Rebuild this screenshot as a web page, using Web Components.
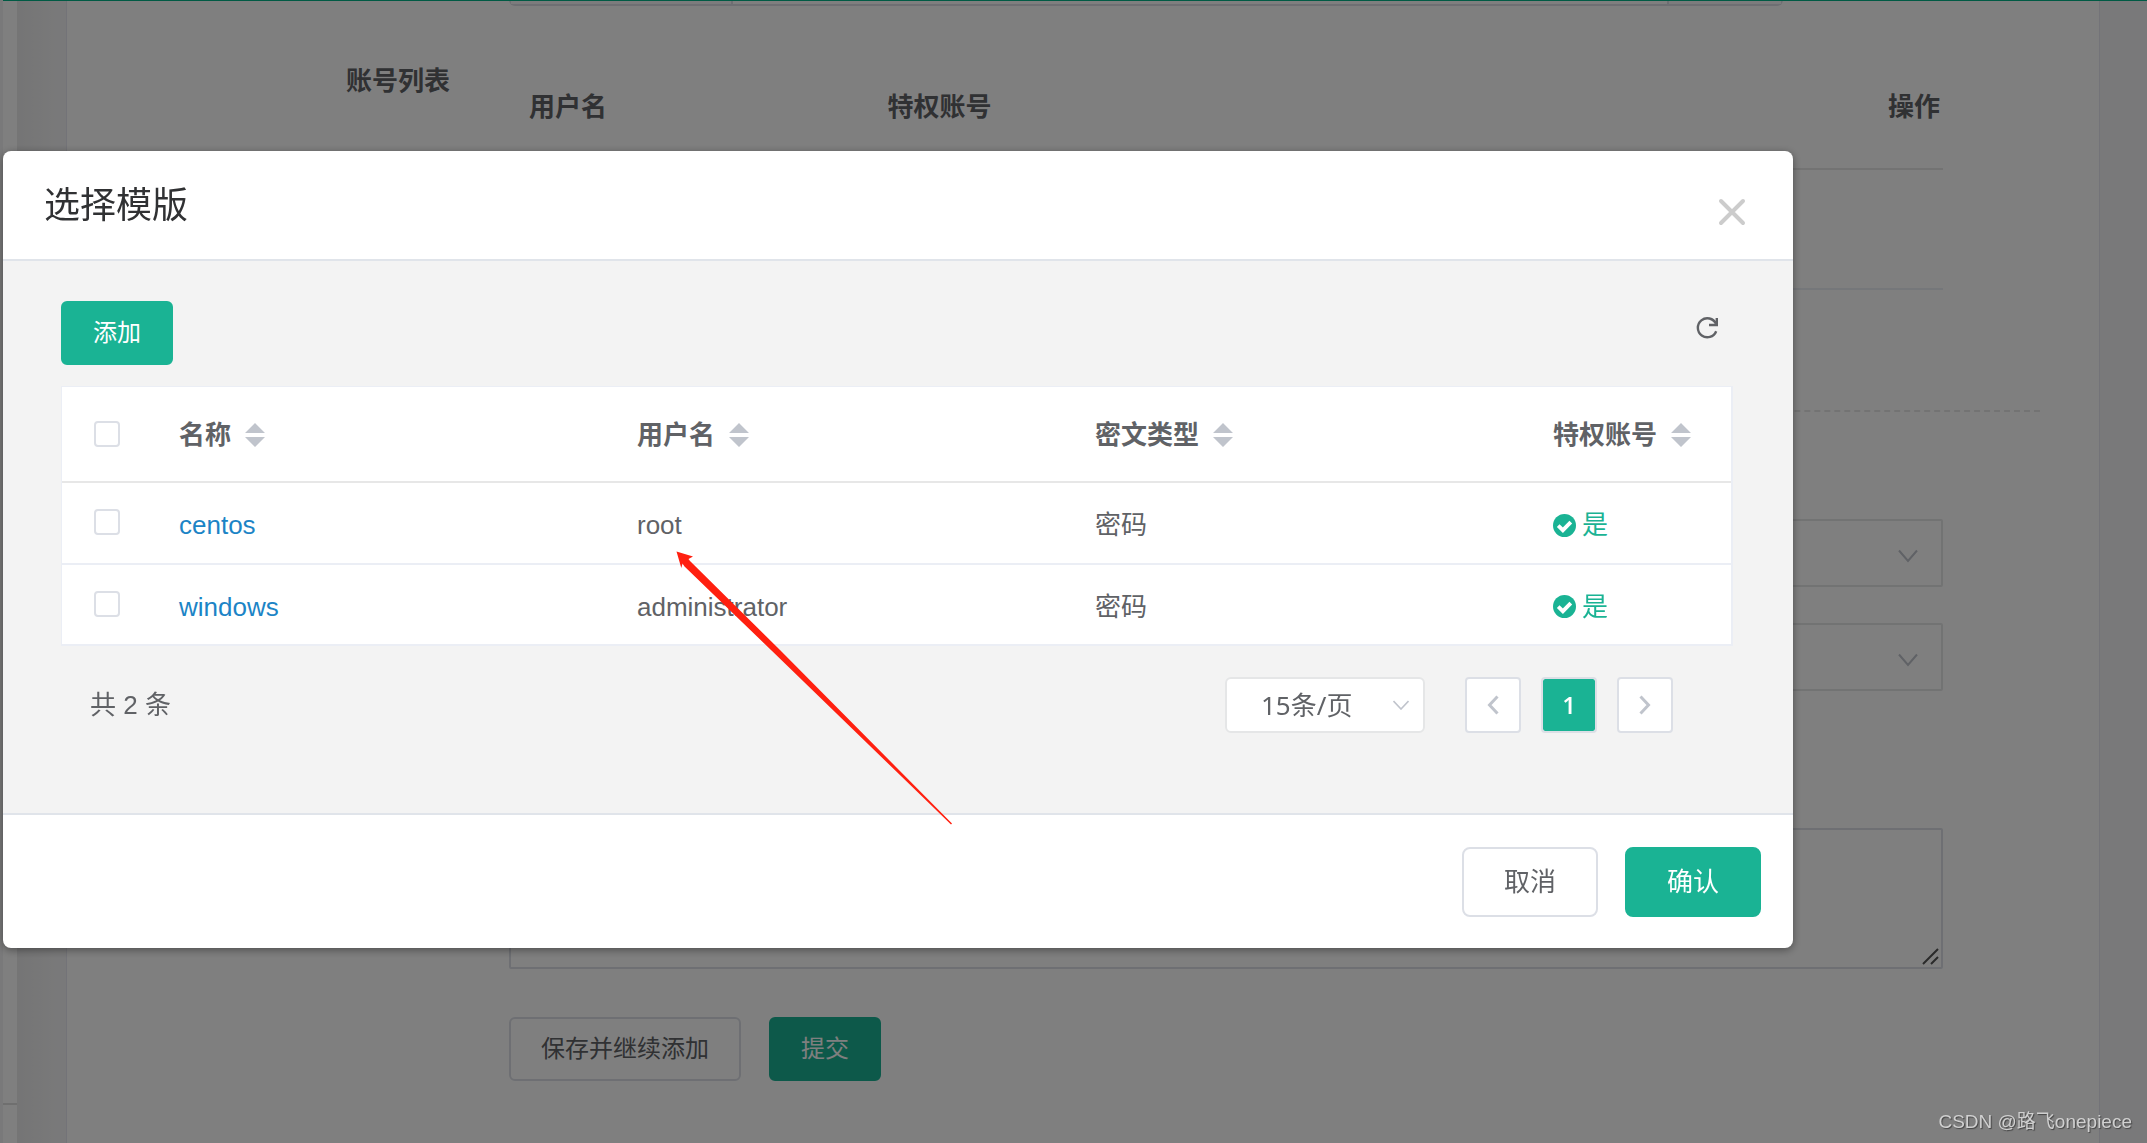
<!DOCTYPE html>
<html lang="zh-CN">
<head>
<meta charset="utf-8">
<title>选择模版</title>
<style>
  html, body { margin: 0; min-height: 100vh; }
  body {
    --brand: #1ab394;
    --line: #dcdfe6;
    --soft: #e5e6e7;
    --pale: #ebeef5;
    --text: #606266;
    font: 26px/36px "Liberation Sans", "Noto Sans CJK SC", sans-serif;
    color: var(--text);
    background: #f3f3f4;
    overflow: hidden;
  }
</style>
</head>
<body>
<account-page>
  <account-form></account-form>
</account-page>

<modal-layer>
  <template-dialog heading="选择模版">
    <table-toolbar></table-toolbar>
    <template-table></template-table>
    <page-bar total="2"></page-bar>
    <ui-button slot="footer" size="large">取消</ui-button>
    <ui-button slot="footer" size="large" kind="primary">确认</ui-button>
  </template-dialog>
  <pointer-arrow></pointer-arrow>
</modal-layer>
<corner-mark>CSDN @路飞onepiece</corner-mark>

<script>
const define = (name, render) => {
  customElements.define(name, class extends HTMLElement {
    constructor() {
      super();
      this.attachShadow({ mode: "open" });
    }
    connectedCallback() {
      this.shadowRoot.innerHTML = "<style>*{box-sizing:border-box}button,input,select,textarea{font:inherit;color:inherit;margin:0}</style>" + render(this);
    }
  });
};

define("ui-button", () => `
  <style>
    :host { display: block; }
    button {
      display: block; height: 64px; padding: 0 30px; border: 2px solid var(--line); border-radius: 6px;
      background: #fff; color: var(--text); font-size: 24px; line-height: 36px; white-space: nowrap;
    }
    :host([kind="primary"]) button { background: var(--brand); border-color: var(--brand); color: #fff; }
    :host([size="large"]) button { height: 70px; padding: 0 40px; border-radius: 8px; font-size: 26px; }
  </style>
  <button type="button"><slot></slot></button>`);

define("account-page", () => `
  <style>
    :host { display: grid; grid-template-columns: 3px 14px 49px minmax(0, 1fr) 47px; min-height: 100vh; }
    .rail { display: flex; flex-direction: column; justify-content: flex-end; background: #fff; }
    .rail i { height: 40px; border-top: 2px solid #dedede; }
    .gap { background: linear-gradient(90deg, #eaeaeb, #f3f3f4 40px); }
    .card { background: #fff; border: solid #e7e7f0; border-width: 0 1px; }
    .bar { position: absolute; inset: 0 0 auto 3px; height: 1px; background: #00b489; }
  </style>
  <div></div>
  <aside class="rail"><i></i></aside>
  <div class="gap"></div>
  <main class="card"><slot></slot></main>
  <div></div>
  <div class="bar"></div>`);

define("form-select", el => `
  <style>
    :host { display: grid; align-items: center; }
    select, svg { grid-area: 1 / 1; }
    select { appearance: none; width: 100%; height: 68px; padding: 0 60px 0 30px; border: 2px solid var(--soft); border-radius: 2px; background: #fff; }
    svg { justify-self: end; margin: 6px 24px 0 0; pointer-events: none; }
  </style>
  <select aria-label="${el.getAttribute("label")}"></select>
  <svg width="22" height="14" viewBox="0 0 22 14" fill="none" stroke="#c0c4cc" stroke-width="2"><path d="M2 1.500 11 12 20 1.500"/></svg>`);

define("account-form", () => `
  <style>
    :host { display: block; padding: 0 59px 0 60px; }
    form { display: flex; flex-direction: column; }
    .row { display: grid; grid-template-columns: 323px minmax(0, 1fr); gap: 59px; margin-right: 97px; }
    .row > :last-child { grid-column: 2; }
    .group { display: grid; grid-template-columns: 222px 1fr 114px; height: 6px; width: 1274px; border: 2px solid var(--line); border-top: 0; border-radius: 0 0 6px 6px; }
    .group i { background: #f8f8fa; }
    .group i:first-child { border-right: 2px solid var(--line); }
    .group i:last-child { border-left: 2px solid var(--line); }
    .accounts { margin-top: 38px; }
    label, .label { text-align: right; font-weight: 700; line-height: 74px; color: #606266; }
    table { width: 100%; border-collapse: collapse; table-layout: fixed; }
    th { height: 125px; padding: 2px 3px 0 20px; text-align: left; border-bottom: 2px solid #e7e7e7; }
    th:nth-child(-n+2) { width: 25%; }
    th:last-child { text-align: right; }
    td { height: 120px; padding: 0; border-bottom: 2px solid var(--pale); }
    hr { width: 100%; margin: 120px 0 107px; border: 0; border-top: 2px dashed #e7e7e7; }
    .next { margin-top: 36px; }
    .note { margin-top: 137px; }
    .area { display: grid; position: relative; }
    textarea { resize: none; width: 100%; height: 141px; border: 2px solid var(--line); border-radius: 2px; background: #fff; }
    .area svg { position: absolute; right: 4px; bottom: 4px; }
    .actions { margin-top: 48px; }
    .actions > div { display: flex; gap: 28px; }
  </style>
  <form>
    <div class="row"><div class="group"><i></i><b></b><i></i></div></div>
    <div class="row accounts">
      <div class="label">账号列表</div>
      <table>
        <thead><tr><th>用户名</th><th>特权账号</th><th>操作</th></tr></thead>
        <tbody><tr><td colspan="3"></td></tr></tbody>
      </table>
    </div>
    <hr>
    <div class="row"><form-select label="网域"></form-select></div>
    <div class="row next"><form-select label="节点"></form-select></div>
    <div class="row note"><div class="area">
      <textarea aria-label="备注"></textarea>
      <svg width="17" height="17" viewBox="0 0 17 17" stroke="#555" stroke-width="2"><path d="M1 16 16 1M9 16 16 9"/></svg>
    </div></div>
    <div class="row actions"><div>
      <ui-button>保存并继续添加</ui-button>
      <ui-button kind="primary">提交</ui-button>
    </div></div>
  </form>`);

define("modal-layer", () => `
  <style>
    :host { display: block; position: fixed; inset: 0; padding: 151px 354px 0 3px; background: rgba(0,0,0,.5); box-sizing: border-box; }
  </style>
  <slot></slot>`);

define("template-dialog", el => `
  <style>
    :host { display: block; border-radius: 8px; background: #fff; box-shadow: 0 2px 8px rgba(0,0,0,.4); overflow: hidden; }
    header { display: flex; justify-content: space-between; align-items: flex-start; height: 110px; padding: 30px 29px 0 41px; border-bottom: 2px solid #e0e4ea; }
    h2 { margin: 0; font-size: 36px; line-height: 50px; font-weight: 400; color: #303133; }
    header button { display: grid; place-items: center; width: 64px; height: 62px; padding: 0; border: 0; background: none; }
    section { display: flex; flex-direction: column; padding: 40px 60px 80px 58px; background: #f3f3f3; }
    footer { display: flex; justify-content: flex-end; gap: 27px; padding: 32px 32px 31px; border-top: 2px solid #e0e4ea; }
  </style>
  <header>
    <h2>${el.getAttribute("heading")}</h2>
    <button type="button" aria-label="关闭"><svg width="28" height="28" viewBox="0 0 28 28" stroke="#ccc" stroke-width="4" stroke-linecap="round"><path d="M3 3 25 25M25 3 3 25"/></svg></button>
  </header>
  <section><slot></slot></section>
  <footer><slot name="footer"></slot></footer>`);

define("table-toolbar", () => `
  <style>
    :host { display: flex; justify-content: space-between; align-items: flex-start; height: 65px; margin-bottom: 20px; }
    .refresh { display: grid; place-items: center; width: 52px; height: 54px; padding: 0; border: 0; background: none; }
  </style>
  <ui-button kind="primary">添加</ui-button>
  <button class="refresh" type="button" aria-label="刷新">
    <svg width="24" height="24" viewBox="0 0 24 24" fill="none" stroke="#606266" stroke-width="2.400"><path d="M21.200 15.200A9.500 9.500 0 1 1 21 7.800"/><path d="M21.800 2v7H14" /></svg>
  </button>`);

define("sort-head", () => `
  <style>
    :host { display: flex; align-items: center; gap: 14px; }
  </style>
  <slot></slot>
  <svg width="20" height="24" viewBox="0 0 20 24" fill="#c0c4cc"><path d="M10 0 20 10H0zM10 24 20 14H0z"/></svg>`);

define("yes-mark", () => `
  <style>
    :host { display: flex; align-items: center; gap: 6px; color: var(--brand); }
  </style>
  <svg width="23" height="23" viewBox="0 0 23 23"><circle cx="11.500" cy="11.500" r="11.500" fill="var(--brand)"/><path d="M5.200 11.600 9.900 16.200 17.800 8.200" fill="none" stroke="#fff" stroke-width="3.800"/></svg>
  <slot></slot>`);

const rows = [["centos", "root"], ["windows", "administrator"]];
define("template-table", () => `
  <style>
    :host { display: block; border: solid var(--pale); border-width: 1px 2px 0 1px; background: #fff; }
    table { width: 100%; border-collapse: separate; border-spacing: 0; table-layout: fixed; }
    th, td { height: 82px; padding: 4px 0 0 20px; text-align: left; border-bottom: 2px solid var(--pale); white-space: nowrap; }
    td { height: 81px; }
    tr:first-child td { height: 82px; }
    th { height: 96px; padding-top: 2px; border-color: #e7e7e7; }
    th:first-child { width: 97px; }
    th:last-child { width: 198px; }
    th:first-child, td:first-child { padding: 0 0 0 32px; }
    td:first-child { padding-bottom: 2px; }
    input { appearance: none; display: block; width: 26px; height: 26px; border: 2px solid var(--line); border-radius: 4px; background: #fff; }
    a { color: #1c84c6; text-decoration: none; }
  </style>
  <table>
    <thead><tr><th><input type="checkbox" aria-label="全选"></th>
      ${["名称", "用户名", "密文类型", "特权账号"].map(t => `<th><sort-head>${t}</sort-head></th>`).join("")}</tr></thead>
    <tbody>${rows.map(([name, user]) => `
      <tr><td><input type="checkbox" aria-label="${name}"></td><td><a href="#${name}">${name}</a></td><td>${user}</td><td>密码</td><td><yes-mark>是</yes-mark></td></tr>`).join("")}
    </tbody>
  </table>`);

define("page-bar", el => `
  <style>
    :host { display: flex; align-items: center; margin-top: 31px; padding: 0 60px 0 29px; }
    .total { margin-right: auto; }
    .size { display: grid; align-items: center; width: 200px; margin-right: 40px; }
    .size > * { grid-area: 1 / 1; }
    select { appearance: none; width: 100%; height: 56px; padding: 0 40px 0 34px; border: 2px solid var(--soft); border-radius: 6px; background: #fff; font-family: "Noto Sans", "Noto Sans CJK SC", sans-serif; }
    .size svg { justify-self: end; margin-right: 16px; pointer-events: none; }
    nav { display: flex; gap: 20px; }
    button { display: grid; place-items: center; width: 56px; height: 56px; padding: 0; border: 2px solid var(--line); border-radius: 4px; background: #fff; font: 600 24px/36px "Open Sans", sans-serif; }
    .on { background: var(--brand); background-clip: padding-box; color: #fff; }
  </style>
  <span class="total">共 ${el.getAttribute("total")} 条</span>
  <div class="size">
    <select aria-label="每页条数"><option>15条/页</option></select>
    <svg width="16" height="10" viewBox="0 0 16 10" fill="none" stroke="#c0c4cc" stroke-width="1.600"><path d="M.500 1 8 9 15.500 1"/></svg>
  </div>
  <nav>
    <button type="button" aria-label="上一页"><svg width="12" height="20" viewBox="0 0 12 20" fill="none" stroke="#c0c4cc" stroke-width="3"><path d="M10.500 1.500 2.500 10 10.500 18.500"/></svg></button>
    <button type="button" class="on">1</button>
    <button type="button" aria-label="下一页"><svg width="12" height="20" viewBox="0 0 12 20" fill="none" stroke="#c0c4cc" stroke-width="3"><path d="M1.500 1.500 9.500 10 1.500 18.500"/></svg></button>
  </nav>`);

define("pointer-arrow", () => `
  <style>
    :host { display: block; position: absolute; left: 676px; top: 551px; pointer-events: none; }
    svg { display: block; }
  </style>
  <svg width="277" height="274" viewBox="676 551 277 274"><path fill="#ff2010" d="M676.500 551.500 693 556.500 688.500 559 690 561 780 650 952 823.500 951 824.500 771 650 684.500 566.500 682.500 563.500 681.300 568z"/></svg>`);

define("corner-mark", () => `
  <style>
    :host { display: block; position: fixed; right: 15px; bottom: 6px; font-size: 19px; line-height: 30px; color: #d0d0d0; text-shadow: 1px 1px 1px #444; }
  </style>
  <slot></slot>`);
</script>
</body>
</html>
